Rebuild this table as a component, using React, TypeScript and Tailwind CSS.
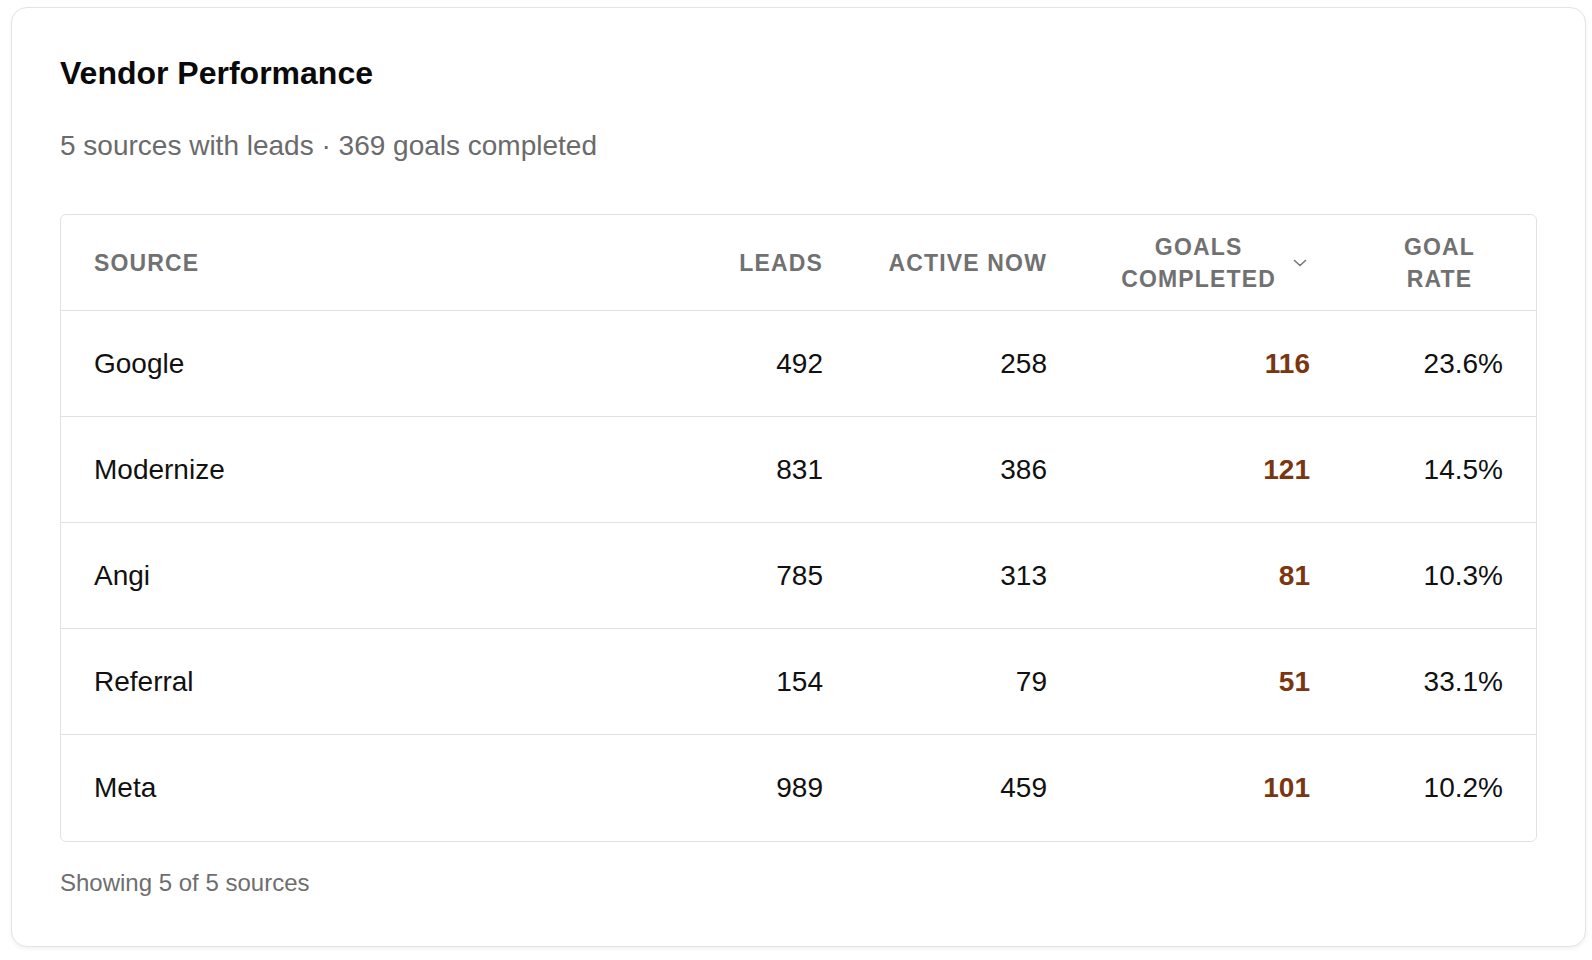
import React from 'react'

type Row = {
  source: string
  leads: number
  active: number
  goals: number
  rate: string
}

const rows: Row[] = [
  { source: 'Google', leads: 492, active: 258, goals: 116, rate: '23.6%' },
  { source: 'Modernize', leads: 831, active: 386, goals: 121, rate: '14.5%' },
  { source: 'Angi', leads: 785, active: 313, goals: 81, rate: '10.3%' },
  { source: 'Referral', leads: 154, active: 79, goals: 51, rate: '33.1%' },
  { source: 'Meta', leads: 989, active: 459, goals: 101, rate: '10.2%' },
]

const cols = 'grid grid-cols-[1fr_160px_224px_264px_193px]'

const ChevronDown = () => (
  <svg width="14" height="8" viewBox="0 0 14 8" fill="none" className="shrink-0">
    <path d="M1.5 1.5 L7 6.5 L12.5 1.5" stroke="#777" strokeWidth="1.6" strokeLinecap="round" strokeLinejoin="round" />
  </svg>
)

const App = () => {
  return (
    <div className="min-h-screen bg-white pl-[11px] pt-[7px] font-['Liberation_Sans',Arial,sans-serif]">
      <div className="w-[1575px] h-[940px] rounded-[16px] border border-[#e4e4e4] bg-white px-12 pt-12 shadow-[0_2px_4px_rgba(0,0,0,0.06)]">
        <h2 className="text-[32px] leading-[34px] font-bold text-[#0a0a0a]">Vendor Performance</h2>
        <p className="mt-[35px] text-[28px] leading-[42px] text-[#6b6b6b]">
          5 sources with leads · 369 goals completed
        </p>

        <div className="mt-[47px] rounded-[6px] border border-[#e2e2e2] overflow-hidden">
          <div className={`${cols} h-[96px] items-center border-b border-[#e2e2e2] text-[23px] leading-[32px] font-bold uppercase tracking-[0.05em] text-[#717171]`}>
            <div className="pl-[33px]">Source</div>
            <div className="pr-8 text-right">Leads</div>
            <div className="pr-8 text-right">Active Now</div>
            <div className="pr-8 flex items-center justify-end gap-[17px]">
              <span className="text-center">Goals<br />Completed</span>
              <span className="pr-[4px]"><ChevronDown /></span>
            </div>
            <div className="pr-[61px] flex justify-end">
              <span className="text-center">Goal<br />Rate</span>
            </div>
          </div>

          {rows.map((r, i) => (
            <div
              key={r.source}
              className={`${cols} h-[106px] items-center text-[28px] text-[#111] ${i < rows.length - 1 ? 'border-b border-[#e2e2e2]' : ''}`}
            >
              <div className="pl-[33px]">{r.source}</div>
              <div className="pr-8 text-right">{r.leads}</div>
              <div className="pr-8 text-right">{r.active}</div>
              <div className="pr-[33px] text-right font-bold text-[#7a3611]">{r.goals}</div>
              <div className="pr-[33px] text-right">{r.rate}</div>
            </div>
          ))}
        </div>

        <p className="mt-[23px] text-[24px] leading-[36px] text-[#6e6e6e]">Showing 5 of 5 sources</p>
      </div>
    </div>
  )
}

export default App
